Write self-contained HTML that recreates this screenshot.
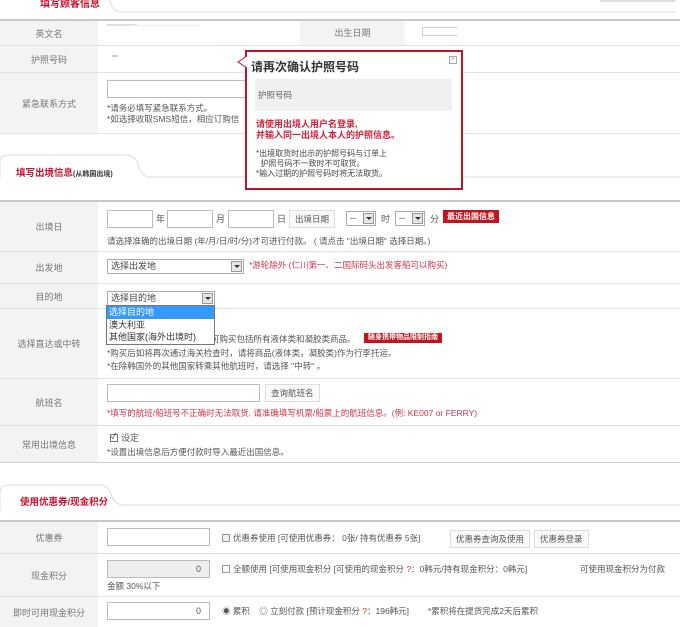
<!DOCTYPE html>
<html><head><meta charset="utf-8"><style>
*{margin:0;padding:0;box-sizing:border-box}
body{width:680px;height:627px;overflow:hidden;background:#fff;font-family:"Liberation Sans","Noto Sans CJK SC",sans-serif;font-size:9px;color:#555;position:relative}
.a{position:absolute;white-space:nowrap}
.lb{position:absolute;left:0;width:98px;background:#f3f3f3;color:#777;display:flex;align-items:center;justify-content:center;font-size:9px}
.hl{position:absolute;left:0;width:680px;height:1px;background:#e2e2e2}
.tl{position:absolute;left:0;width:680px;height:2px;background:#c8c8c8}
.inp{position:absolute;border:1px solid #bbb;background:#fff;height:18px}
.btn{position:absolute;border:1px solid #ddd;background:#fafafa;color:#555;font-size:8.5px;height:18px;line-height:16px;padding:0 5px;white-space:nowrap}
.sel{position:absolute;border:1px solid #aaa;background:#fff;height:15px;font-size:9px;line-height:13px;padding-left:3px;color:#444}
.sel i{position:absolute;right:1px;top:1px;width:11px;height:11px;background:#e6e6e6;border:1px solid #999}
.sel i:after{content:"";position:absolute;left:2px;top:3px;border-left:3px solid transparent;border-right:3px solid transparent;border-top:3px solid #333}
.red{color:#d4334a}
.rb{position:absolute;background:#c4131f;color:#fff;font-size:8px;font-weight:bold;padding:0 4px;line-height:13px}
.cb{display:inline-block;width:8px;height:8px;border:1px solid #999;background:#eee;vertical-align:-1px;margin-right:3px}
</style></head><body>

<svg class="a" style="left:0;top:0" width="680" height="20"><path d="M110 0 Q112 12 122 12 L675 12" stroke="#ddd" fill="none"/><rect x="600" y="0" width="75" height="2" fill="#ddd"/></svg>
<div class="a" style="left:40px;top:-5px;color:#c8102e;font-weight:bold;font-size:10px">填写顾客信息</div>
<div class="tl" style="top:19px"></div>

<div class="lb" style="top:21px;height:24px">英文名</div>
<div class="a" style="left:107px;top:24px;width:30px;height:2px;background:#ddd"></div>
<div class="a" style="left:130px;top:25px;width:70px;height:1px;background:#eee"></div>
<div class="a" style="left:300px;top:21px;width:105px;height:24px;background:#f3f3f3;color:#777;text-align:center;line-height:24px">出生日期</div>
<div class="a" style="left:422px;top:27px;width:35px;height:9px;border:1px solid #ccc;border-right:none"></div>
<div class="hl" style="top:45px"></div>
<div class="lb" style="top:46px;height:26px">护照号码</div>
<div class="a" style="left:112px;top:55px;width:6px;height:2px;background:#ccc"></div>
<div class="hl" style="top:72px"></div>
<div class="lb" style="top:73px;height:60px">紧急联系方式</div>
<div class="inp" style="left:107px;top:80px;width:140px"></div>
<div class="a" style="left:107px;top:103px;line-height:11px;font-size:8.5px">*请务必填写紧急联系方式。<br>*如选择收取SMS短信，相应订购信</div>
<div class="hl" style="top:133px"></div>

<svg class="a" style="left:0;top:150px" width="680" height="32"><path d="M0 28 L0 12 Q0 5 10 5 L125 5 Q135 5 138 14 Q141 27 150 27 L680 27" stroke="#ddd" fill="none"/></svg>
<div class="a" style="left:16px;top:165px;font-weight:bold;font-size:9.5px;color:#c8102e">填写出境信息<span style="color:#333;font-size:7px">(从韩国出境)</span></div>
<div class="tl" style="top:200px"></div>

<div class="lb" style="top:202px;height:49px">出境日</div>
<div class="inp" style="left:107px;top:210px;width:46px"></div><div class="a" style="left:156px;top:212px">年</div>
<div class="inp" style="left:167px;top:210px;width:46px"></div><div class="a" style="left:216px;top:212px">月</div>
<div class="inp" style="left:228px;top:210px;width:46px"></div><div class="a" style="left:277px;top:212px">日</div>
<div class="btn" style="left:289px;top:210px">出境日期</div>
<div class="sel" style="left:346px;top:211px;width:30px">--<i></i></div><div class="a" style="left:381px;top:212px">时</div>
<div class="sel" style="left:395px;top:211px;width:30px">--<i></i></div><div class="a" style="left:430px;top:212px">分</div>
<div class="rb" style="left:443px;top:210px">最近出国信息</div>
<div class="a" style="left:107px;top:235px;font-size:8.5px">请选择准确的出境日期 (年/月/日/时/分)才可进行付款。 ( 请点击 "出境日期" 选择日期。)</div>
<div class="hl" style="top:251px"></div>
<div class="lb" style="top:252px;height:31px">出发地</div>
<div class="sel" style="left:107px;top:259px;width:137px">选择出发地<i></i></div>
<div class="a red" style="left:249px;top:259px;font-size:8.5px">*游轮除外 (仁川第一、二国际码头出发客船可以购买)</div>
<div class="hl" style="top:283px"></div>
<div class="lb" style="top:284px;height:24px">目的地</div>
<div class="sel" style="left:107px;top:291px;width:108px">选择目的地<i></i></div>
<div class="hl" style="top:308px"></div>
<div class="lb" style="top:309px;height:69px">选择直达或中转</div>
<div class="a" style="left:211px;top:333px;font-size:8.5px">可购买包括所有液体类和凝胶类商品。</div>
<div class="rb" style="left:364px;top:333px;font-size:7px;line-height:10px">随身携带物品限制指南</div>
<div class="a" style="left:107px;top:347px;font-size:8.5px;line-height:13px">*购买后如将再次通过海关检查时，请将商品(液体类，凝胶类)作为行李托运。<br>*在除韩国外的其他国家转乘其他航班时，请选择 "中转" 。</div>
<div class="a" style="left:106px;top:305px;width:109px;height:40px;border:1px solid #777;background:#fff;font-size:9px;line-height:12.5px;color:#333">
<div style="background:#3399ff;color:#fff;padding-left:2px">选择目的地</div><div style="padding-left:2px">澳大利亚</div><div style="padding-left:2px">其他国家(海外出境时)</div></div>
<div class="hl" style="top:378px"></div>
<div class="lb" style="top:379px;height:46px">航班名</div>
<div class="inp" style="left:107px;top:384px;width:153px"></div>
<div class="btn" style="left:265px;top:384px">查询航班名</div>
<div class="a red" style="left:107px;top:407px;font-size:8.5px">*填写的航班/船班号不正确时无法取货, 请准确填写机票/船票上的航班信息。(例: KE007 or FERRY)</div>
<div class="hl" style="top:425px"></div>
<div class="lb" style="top:426px;height:36px">常用出境信息</div>
<div class="a" style="left:110px;top:431px"><span class="cb" style="background:#fff;border-color:#777;position:relative"><span style="position:absolute;left:0;top:-4px;font-size:8px;color:#333">✓</span></span>设定</div>
<div class="a" style="left:107px;top:446px;font-size:8.5px">*设置出境信息后方便付款时导入最近出国信息。</div>
<div class="tl" style="top:462px;height:1px;background:#ccc"></div>

<svg class="a" style="left:0;top:478px" width="680" height="40"><path d="M0 33 L0 14 Q0 7 10 7 L100 7 Q108 7 111 16 Q114 27 124 27 L680 27" stroke="#ddd" fill="none"/></svg>
<div class="a" style="left:20px;top:494px;font-weight:bold;font-size:9.5px;color:#c8102e">使用优惠券/现金积分</div>
<div class="tl" style="top:520px"></div>

<div class="lb" style="top:522px;height:31px">优惠券</div>
<div class="inp" style="left:107px;top:528px;width:103px"></div>
<div class="a" style="left:222px;top:532px;font-size:8.5px"><span class="cb"></span>优惠券使用 [可使用优惠券： 0张/ 持有优惠券 5张]</div>
<div class="btn" style="left:450px;top:530px">优惠券查询及使用</div>
<div class="btn" style="left:534px;top:530px">优惠券登录</div>
<div class="hl" style="top:553px"></div>
<div class="lb" style="top:554px;height:42px">现金积分</div>
<div class="inp" style="left:107px;top:560px;width:103px;background:#eee;text-align:right;padding-right:8px;line-height:16px">0</div>
<div class="a" style="left:222px;top:563px;font-size:8.5px"><span class="cb" style="background:#fff"></span>全额使用 [可使用现金积分 [可使用的现金积分 <span style="color:#c33">?</span>：0韩元/持有现金积分：0韩元]</div>
<div class="a" style="left:580px;top:563px;font-size:8.5px">可使用现金积分为付款</div>
<div class="a" style="left:107px;top:580px;font-size:8.5px">金额 30%以下</div>
<div class="hl" style="top:596px"></div>
<div class="lb" style="top:597px;height:30px">即时可用现金积分</div>
<div class="inp" style="left:107px;top:602px;width:103px;text-align:right;padding-right:8px;line-height:16px">0</div>
<div class="a" style="left:222px;top:605px;font-size:8.5px">◉ 累积 &nbsp;&nbsp; ◎ 立刻付款 [预计现金积分 <span style="color:#c33">?</span>：196韩元] &nbsp;&nbsp;&nbsp;&nbsp;&nbsp;&nbsp; *累积将在提货完成2天后累积</div>

<div class="a" style="left:245px;top:50px;width:218px;height:140px;border:2px solid #c0142a;background:#fff"></div>
<svg class="a" style="left:236px;top:56px" width="12" height="14"><path d="M11 0 L2 6 L11 12" fill="#fff" stroke="#c0142a" stroke-width="1"/></svg>
<div class="a" style="left:449px;top:56px;width:8px;height:8px;border:1px solid #aaa;font-size:7px;line-height:6px;text-align:center;color:#999">×</div>
<div class="a" style="left:251px;top:58px;font-size:12px;font-weight:bold;color:#333">请再次确认护照号码</div>
<div class="a" style="left:255px;top:79px;width:197px;height:32px;background:#f0f0f0;padding-left:3px;line-height:32px;font-size:8.5px;color:#666">护照号码</div>
<div class="a" style="left:256px;top:119px;color:#d0203a;font-weight:bold;font-size:9px;line-height:11px">请使用出境人用户名登录,<br>并输入同一出境人本人的护照信息。</div>
<div class="a" style="left:256px;top:149px;font-size:8px;line-height:10px;color:#444">*出境取货时出示的护照号码与订单上<br>&nbsp;&nbsp;护照号码不一致时不可取货。<br>*输入过期的护照号码时将无法取货。</div>
</body></html>
